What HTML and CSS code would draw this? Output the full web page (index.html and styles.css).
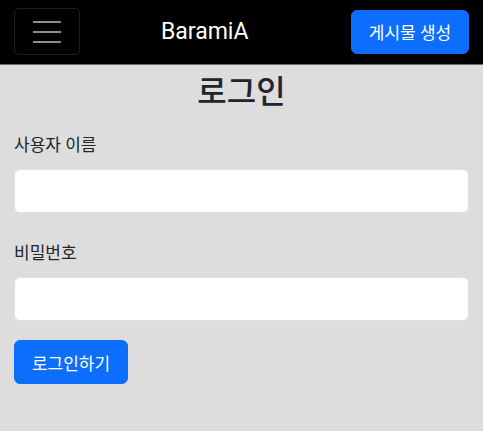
FILE: index.html
```html
<!DOCTYPE html>
<html lang="ko">
<head>
<meta charset="utf-8">
<link rel="stylesheet" href="styles.css">
</head>
<body>
<nav class="navbar">
  <button class="toggler" aria-label="menu">
    <svg width="30" height="30" viewBox="0 0 30 30"><path d="M1 5h28M1 15h28M1 25h28" stroke="#8c8c8c" stroke-width="2"/></svg>
  </button>
  <div class="brand">BaramiA</div>
  <button class="btn nav-btn">게시물 생성</button>
</nav>
<main class="content">
  <h2 class="title">로그인</h2>
  <form class="form">
    <label class="label">사용자 이름</label>
    <input class="input" type="text">
    <label class="label">비밀번호</label>
    <input class="input" type="password">
    <div><button class="btn submit" type="button">로그인하기</button></div>
  </form>
</main>
</body>
</html>
```
FILE: styles.css
```css
* { box-sizing: border-box; }
html, body { margin: 0; }
body {
  background: #dddddd;
  font-family: Roboto, "Noto Sans CJK KR", sans-serif;
  color: #212529;
  height: 431px;
}
.navbar {
  background: #000;
  height: 65px;
  border-bottom: 1px solid #6b6b6b;
  display: flex;
  align-items: center;
  padding: 0 14px;
}
.toggler {
  width: 66px;
  height: 47px;
  background: transparent;
  border: 1px solid rgba(255,255,255,0.12);
  border-radius: 5px;
  display: flex;
  align-items: center;
  justify-content: center;
  padding: 0;
  margin-top: -1px;
}
.brand {
  color: #fff;
  font-size: 23px;
  margin-left: 81px;
  flex: 1;
  margin-top: -1px;
}
.btn {
  font-family: Roboto, "Noto Sans CJK KR", sans-serif;
  background: #0d6efd;
  color: #fff;
  border: 1px solid #0d6efd;
  border-radius: 6px;
  font-size: 17px;
  cursor: pointer;
}
.nav-btn {
  width: 118px;
  height: 44px;
  margin-top: -1px;
}
.content {
  padding: 0 14px;
}
.title {
  margin: 8px 0 0;
  text-align: center;
  font-size: 32px;
  font-weight: 500;
  line-height: 38px;
}
.form {
  display: flex;
  flex-direction: column;
}
.label {
  font-size: 17px;
  line-height: 24px;
  margin-top: 22px;
  margin-bottom: 12px;
}
.input {
  height: 44px;
  background: #fff;
  border: 1px solid #dee2e6;
  border-radius: 6px;
  width: 100%;
}
.label + .input + .label { margin-top: 28px; }
.submit {
  margin-top: 19px;
  width: 114px;
  height: 44px;
}
```
